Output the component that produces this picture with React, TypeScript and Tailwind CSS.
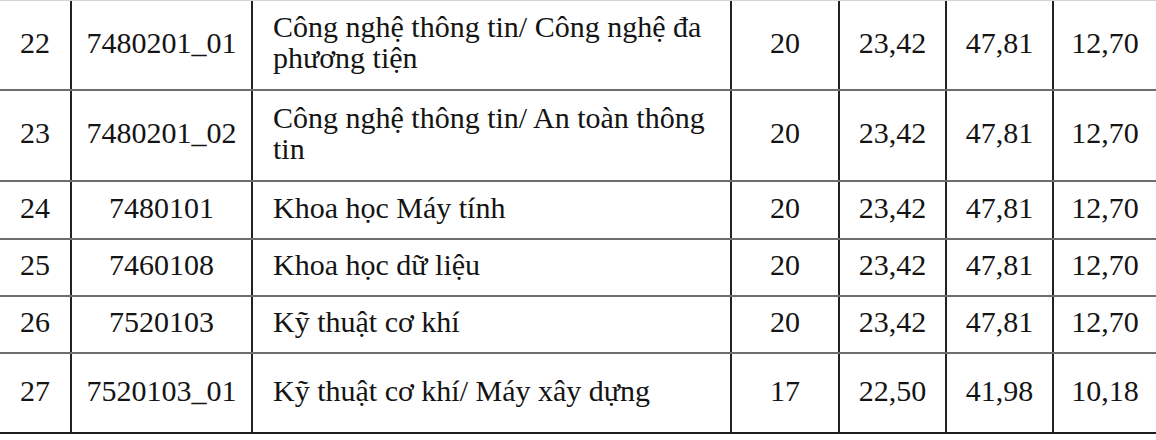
const ROWS: { stt: string; code: string; name: string[]; quota: string; a: string; b: string; c: string; h: string }[] = [
  { stt: "22", code: "7480201_01", name: ["Công nghệ thông tin/ Công nghệ đa", "phương tiện"], quota: "20", a: "23,42", b: "47,81", c: "12,70", h: "h-[90px]" },
  { stt: "23", code: "7480201_02", name: ["Công nghệ thông tin/ An toàn thông", "tin"], quota: "20", a: "23,42", b: "47,81", c: "12,70", h: "h-[91px]" },
  { stt: "24", code: "7480101", name: ["Khoa học Máy tính"], quota: "20", a: "23,42", b: "47,81", c: "12,70", h: "h-[58px]" },
  { stt: "25", code: "7460108", name: ["Khoa học dữ liệu"], quota: "20", a: "23,42", b: "47,81", c: "12,70", h: "h-[57px]" },
  { stt: "26", code: "7520103", name: ["Kỹ thuật cơ khí"], quota: "20", a: "23,42", b: "47,81", c: "12,70", h: "h-[57px]" },
  { stt: "27", code: "7520103_01", name: ["Kỹ thuật cơ khí/ Máy xây dựng"], quota: "17", a: "22,50", b: "41,98", c: "10,18", h: "h-[80px]" },
];

const cell = "flex items-center justify-center border-r-2 border-[#222] pb-[6px]";

export default function App() {
  return (
    <div
      className="w-[1156px] h-[440px] overflow-hidden bg-white text-[30px] leading-[31px] text-[#141414]"
      style={{ fontFamily: '"Liberation Serif", "Times New Roman", serif' }}
    >
      <div className="border-t border-[#d4d4d4]">
        {ROWS.map((r, i) => (
          <div
            key={r.stt}
            className={`flex ${r.h} border-b-2 ${
              i === ROWS.length - 1 ? "border-[#1e1e1e]" : "border-[#6e6e6e]"
            }`}
          >
            <div className={`${cell} w-[72px]`}>{r.stt}</div>
            <div className={`${cell} w-[181px]`}>{r.code}</div>
            <div className="flex w-[479px] flex-col justify-center border-r-2 border-[#222] pb-[6px] pl-[20px]">
              {r.name.map((line) => (
                <span key={line}>{line}</span>
              ))}
            </div>
            <div className={`${cell} w-[108px]`}>{r.quota}</div>
            <div className={`${cell} w-[107px]`}>{r.a}</div>
            <div className={`${cell} w-[107px]`}>{r.b}</div>
            <div className="flex w-[102px] items-center justify-center pb-[6px]">{r.c}</div>
          </div>
        ))}
      </div>
    </div>
  );
}
